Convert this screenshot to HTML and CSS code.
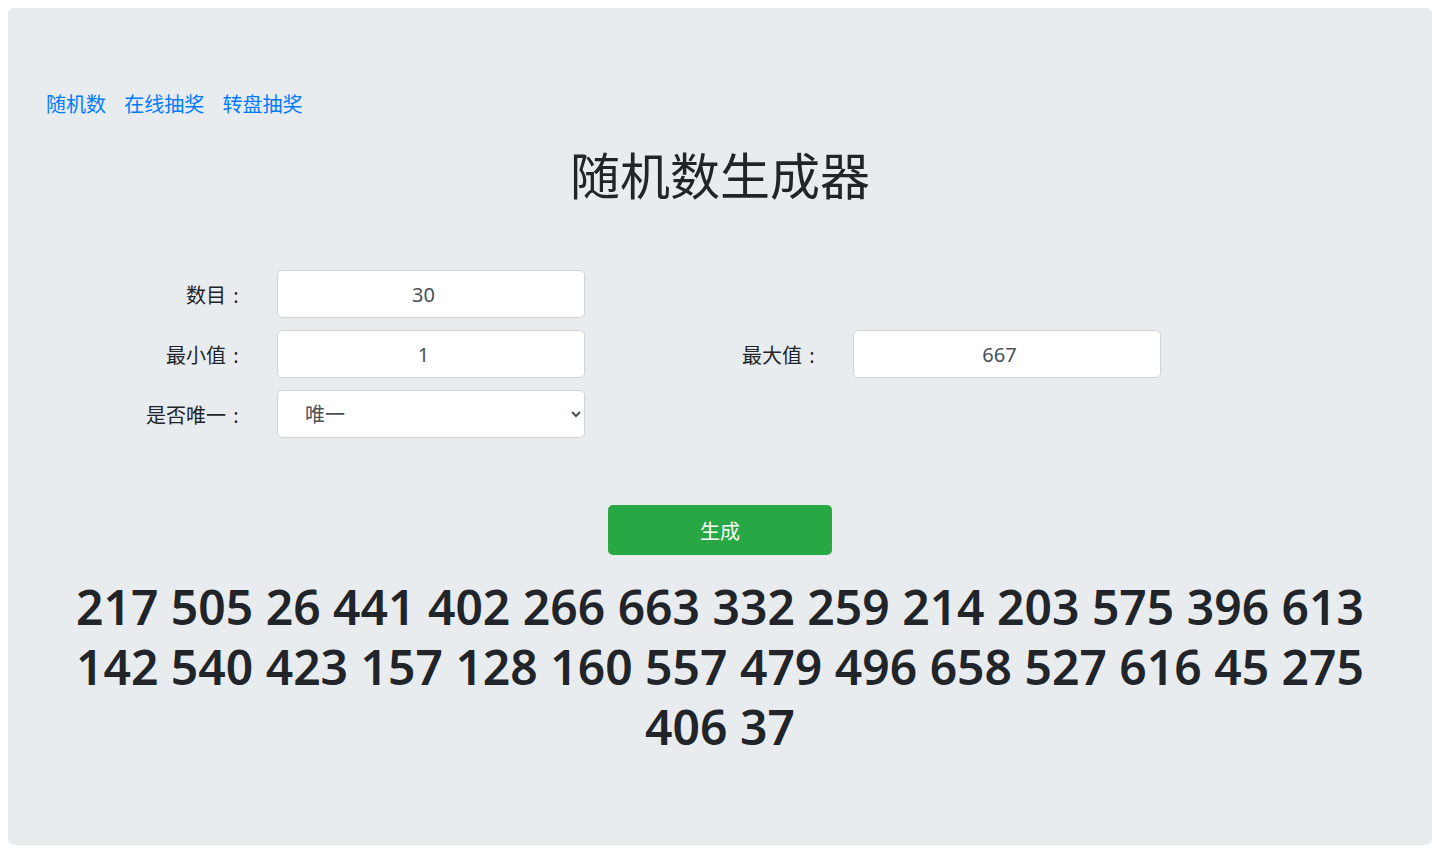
FILE: index.html
```html
<!DOCTYPE html>
<html lang="zh">
<head>
    <meta charset="UTF-8">
    <title>随机数生成器</title>
    <link rel="stylesheet" href="styles.css">
</head>
<body>
    <div class="jumbotron">
        <div class="nav">
            <a href="javascript:;">随机数</a>
            <a href="javascript:;">在线抽奖</a>
            <a href="javascript:;">转盘抽奖</a>
        </div>
        <h1 class="title">随机数生成器</h1>
        <form class="form" onsubmit="return false;">
            <div class="field">
                <label for="count">数目<span class="colon">:</span></label>
                <input type="number" id="count" value="30">
            </div>
            <div class="field"></div>
            <div class="field">
                <label for="min">最小值<span class="colon">:</span></label>
                <input type="number" id="min" value="1">
            </div>
            <div class="field">
                <label for="max">最大值<span class="colon">:</span></label>
                <input type="number" id="max" value="667">
            </div>
            <div class="field">
                <label for="unique">是否唯一<span class="colon">:</span></label>
                <select id="unique">
                    <option>唯一</option>
                    <option>不唯一</option>
                </select>
            </div>
        </form>
        <div class="actions">
            <button class="btn-success" type="button">生成</button>
        </div>
        <div class="result">217 505 26 441 402 266 663 332 259 214 203 575 396 613 142 540 423 157 128 160 557 479 496 658 527 616 45 275 406 37</div>
    </div>
</body>
</html>
```

FILE: styles.css
```css
body{
    margin: 8px;
    font-family: "Noto Sans", "Noto Sans CJK SC", sans-serif;
    color: #212529;
}
.jumbotron{
    background-color: #e9ecef;
    border-radius: 6px;
    padding: 82px 32px 87px;
    height: 837px;
    box-sizing: border-box;
}
.nav{
    padding-left: 6px;
    font-size: 20px;
    line-height: 30px;
}
.nav a{
    color: #007bff;
    text-decoration: none;
    margin-right: 13px;
}
.title{
    margin: 26px 0 0;
    text-align: center;
    font-size: 50px;
    font-weight: 400;
    line-height: 60px;
}
.form{
    width: 1152px;
    margin: 64px auto 0;
    display: grid;
    grid-template-columns: 576px 576px;
    row-gap: 12px;
}
.field{
    display: flex;
    align-items: center;
    height: 48px;
}
.field label{
    width: 110px;
    margin-left: -8px;
    margin-right: 31px;
    text-align: right;
    font-size: 20px;
    white-space: nowrap;
}
/* 冒号占一个汉字宽，居中 */
.colon{
    display: inline-block;
    width: 20px;
    text-align: center;
}
.field input,
.field select{
    width: 308px;
    height: 48px;
    box-sizing: border-box;
    border: 1px solid #ced4da;
    border-radius: 5px;
    background-color: #fff;
    color: #495057;
    font-family: inherit;
    font-size: 20px;
}
.field input{
    text-align: center;
    padding: 0 16px;
}
.field select{
    padding: 0 6px 0 23px;
}
.actions{
    margin-top: 67px;
    text-align: center;
}
.btn-success{
    width: 224px;
    height: 50px;
    border: none;
    border-radius: 5px;
    background-color: #28a745;
    color: #fff;
    font-family: inherit;
    font-size: 20px;
    cursor: pointer;
}
.result{
    margin-top: 22px;
    text-align: center;
    font-size: 48px;
    font-weight: 600;
    line-height: 60px;
}
```
